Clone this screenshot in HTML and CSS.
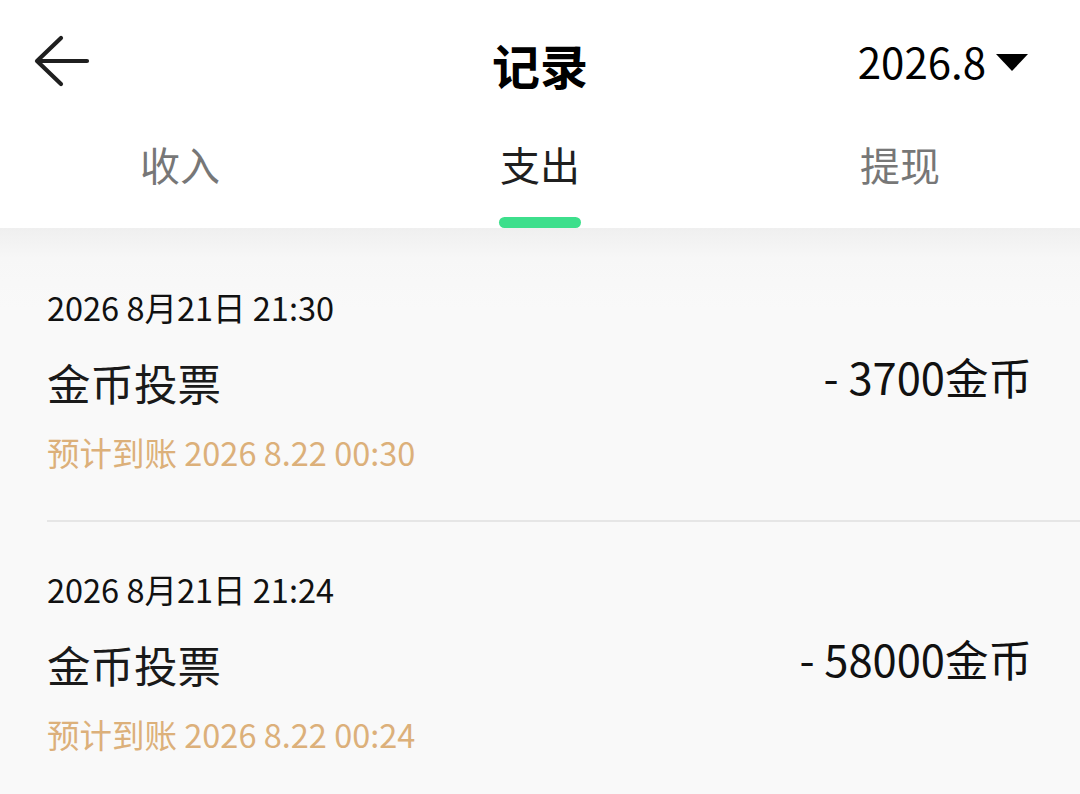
FILE: index.html
```html
<!DOCTYPE html>
<html lang="zh-CN">
<head>
<meta charset="utf-8">
<title>记录</title>
<link rel="stylesheet" href="styles.css">
</head>
<body>
<div class="page">
  <header class="header">
    <div class="topbar">
      <div class="back">
        <svg width="56" height="52" viewBox="0 0 56 52" fill="none" stroke="#1f1f1f" stroke-width="4.2" stroke-linecap="round" stroke-linejoin="round">
          <path d="M27 3 L3 26 L27 49"/>
          <path d="M4 26 H53"/>
        </svg>
      </div>
      <h1 class="title">记录</h1>
      <div class="month">
        <span>2026.8</span>
        <svg class="caret" width="32" height="17" viewBox="0 0 32 17"><path d="M0 0 H32 L16 17 Z" fill="#000"/></svg>
      </div>
    </div>
    <nav class="tabs">
      <div class="tab">收入</div>
      <div class="tab active">支出</div>
      <div class="tab">提现</div>
    </nav>
  </header>
  <main class="list">
    <section class="item">
      <div class="date">2026 8月21日 21:30</div>
      <div class="row">
        <div class="name">金币投票</div>
        <div class="amount">- 3700金币</div>
      </div>
      <div class="eta">预计到账 2026 8.22 00:30</div>
    </section>
    <section class="item">
      <div class="date">2026 8月21日 21:24</div>
      <div class="row">
        <div class="name">金币投票</div>
        <div class="amount">- 58000金币</div>
      </div>
      <div class="eta">预计到账 2026 8.22 00:24</div>
    </section>
  </main>
</div>
</body>
</html>
```
FILE: styles.css
```css
* { box-sizing: border-box; margin: 0; padding: 0; }
html, body { width: 1080px; height: 794px; overflow: hidden; }
body {
  font-family: "Noto Sans CJK SC", "Noto Sans", sans-serif;
  background: #f9f9f9;
  color: #111;
}
.page { display: flex; flex-direction: column; height: 794px; overflow: hidden; }
.header { background: #fff; flex: none; }
.topbar {
  height: 128px;
  display: flex;
  align-items: center;
  justify-content: space-between;
  padding: 0 52px 0 34px;
  position: relative;
}
.back { width: 56px; height: 52px; display: flex; margin-top: -6px; }
.title {
  position: absolute;
  left: 0; right: 0;
  top: 40px;
  text-align: center;
  font-size: 48px;
  font-weight: 700;
  color: #000;
  line-height: 1;
  pointer-events: none;
}
.month {
  display: flex;
  align-items: center;
  gap: 10px;
  font-size: 42px;
  color: #000;
  line-height: 1;
  margin-top: -6px;
}
.caret { margin-top: 2px; }
.tabs {
  display: grid;
  grid-template-columns: repeat(3, 1fr);
  height: 100px;
}
.tab {
  display: flex;
  justify-content: center;
  padding-top: 10px;
  font-size: 40px;
  line-height: 52px;
  color: #777;
  position: relative;
}
.tab.active { color: #1f1f1f; }
.tab.active::after {
  content: "";
  position: absolute;
  left: 50%;
  bottom: 0;
  width: 82px;
  height: 11px;
  margin-left: -41px;
  border-radius: 6px;
  background: #3ddf8c;
}
.list {
  flex: 1;
  background: linear-gradient(#efefef 0, #f7f7f7 30px, #f9f9f9 80px);
  padding-top: 12px;
}
.item {
  margin-left: 47px;
  padding: 45px 48px 46px 0;
  height: 282px;
  border-bottom: 2px solid #e6e6e6;
}
.date { font-size: 32.5px; line-height: 44px; color: #111; }
.row {
  display: flex;
  justify-content: space-between;
  align-items: center;
  margin-top: 24px;
  height: 60px;
}
.name { font-size: 43.5px; line-height: 60px; color: #1a1a1a; }
.amount { font-size: 43.5px; line-height: 60px; color: #111; margin-top: -12px; }
.eta { font-size: 32.5px; line-height: 44px; color: #dcb07a; margin-top: 17px; }
```
